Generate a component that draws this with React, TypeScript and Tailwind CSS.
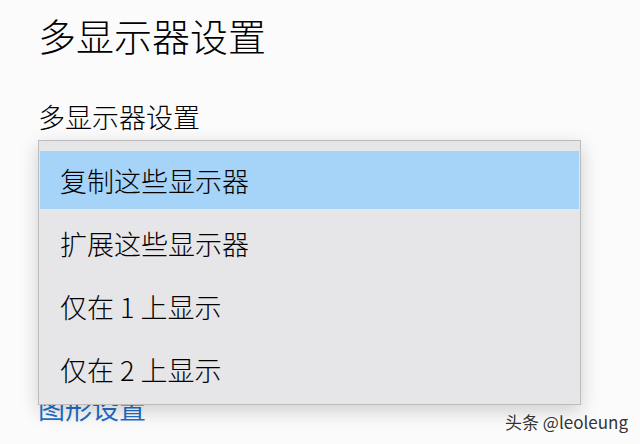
import React from "react";

const font = { fontFamily: '"Noto Sans CJK SC", "Noto Sans", sans-serif' };

export default function App() {
  const items = ["复制这些显示器", "扩展这些显示器", "仅在 1 上显示", "仅在 2 上显示"];
  return (
    <div className="relative w-[640px] h-[444px] overflow-hidden bg-[#fbfbfc] text-black font-light" style={font}>
      <div className="flex flex-col pl-[38px]">
        <div className="mt-[16px] text-[38px] leading-[38px]">多显示器设置</div>
        <div className="mt-[49px] text-[27px] leading-[27px]">多显示器设置</div>
        <div className="h-[38px] w-[300px] mt-[10px]"></div>
        <div className="mt-[216px] text-[27px] leading-[27px] text-[#1f6fc8] font-normal">图形设置</div>
      </div>

      <div className="absolute left-[38px] top-[140px] w-[543px] border border-[#bcbcbc] bg-[#e6e5e7] px-[1px] pt-[10px] pb-[6px] shadow-[0_6px_18px_rgba(0,0,0,0.18)]">
        <div className="flex flex-col gap-[5px]">
          {items.map((t, i) => (
            <div
              key={t}
              className={
                "h-[58px] flex items-center pl-[20px] text-[27px] leading-none text-black " +
                (i === 0 ? "bg-[#a6d3f8]" : "")
              }
            >
              {t}
            </div>
          ))}
        </div>
      </div>

      <div className="absolute right-[12px] top-[412px] text-[17px] leading-[20px] text-[#333] font-normal [text-shadow:0_0_2px_#fff]">
        头条 @leoleung
      </div>
    </div>
  );
}
